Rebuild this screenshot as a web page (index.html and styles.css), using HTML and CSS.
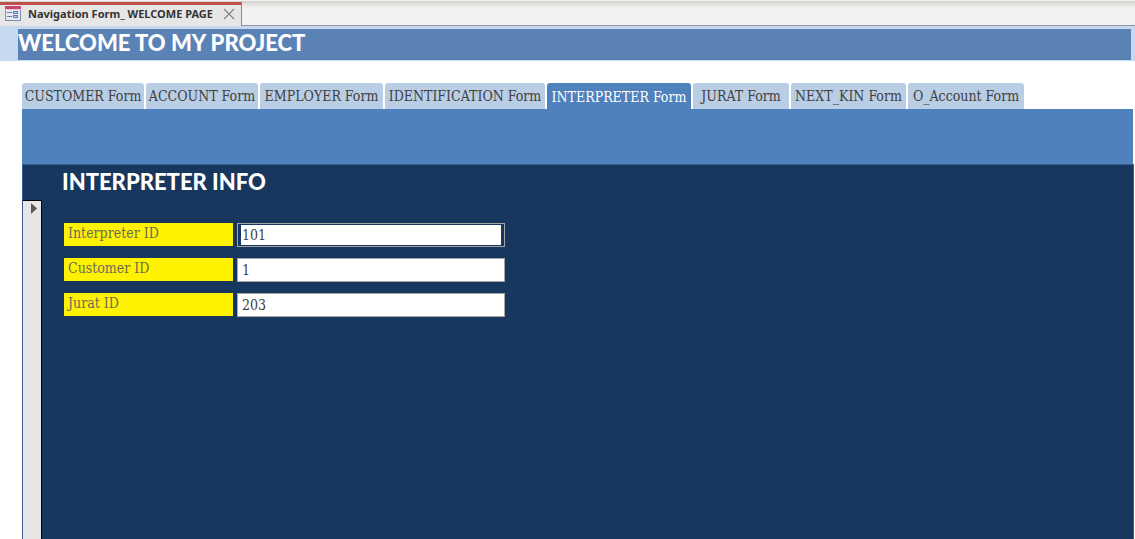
FILE: index.html
```html
<!DOCTYPE html>
<html lang="en">
<head>
<meta charset="utf-8">
<title>Navigation Form_ WELCOME PAGE</title>
<link rel="stylesheet" href="styles.css">
</head>
<body>
<div class="document-bar">
  <div class="document-tab">
    <svg class="form-icon" width="16" height="15" viewBox="0 0 16 15" aria-hidden="true">
      <rect x="0" y="0" width="16" height="15" fill="#7f8fb5"/>
      <rect x="1" y="3" width="14" height="11" fill="#e4e9f4"/>
      <rect x="0" y="0" width="16" height="3" fill="#c4476f"/>
      <rect x="0" y="3" width="16" height="1" fill="#ebc3d0"/>
      <path d="M2 6.500h5M2 10.500h5" stroke="#6a7ca6"/>
      <rect x="8.500" y="5.500" width="4" height="2" fill="#c5d2e8" stroke="#6a7ca6"/>
      <rect x="8.500" y="9.500" width="4" height="2" fill="#c5d2e8" stroke="#6a7ca6"/>
    </svg>
    <span class="document-title">Navigation Form_ WELCOME PAGE</span>
    <button class="close-button" type="button" aria-label="Close">
      <svg width="12" height="12" viewBox="0 0 12 12"><path d="M1 1l10 10M11 1L1 11" stroke="#858585" stroke-width="1.200"/></svg>
    </button>
  </div>
</div>
<header class="page-header"><h1 class="page-title">WELCOME TO MY PROJECT</h1></header>
<main class="workspace">
  <nav class="form-tabs">
    <button class="form-tab" type="button">CUSTOMER Form</button>
    <button class="form-tab" type="button">ACCOUNT Form</button>
    <button class="form-tab" type="button">EMPLOYER Form</button>
    <button class="form-tab" type="button">IDENTIFICATION Form</button>
    <button class="form-tab active" type="button" aria-current="page">INTERPRETER Form</button>
    <button class="form-tab" type="button">JURAT Form</button>
    <button class="form-tab" type="button">NEXT_KIN Form</button>
    <button class="form-tab" type="button">O_Account Form</button>
  </nav>
  <div class="band"></div>
  <section class="subform">
    <h2 class="subform-title">INTERPRETER INFO</h2>
    <div class="record">
      <button class="record-selector" type="button" aria-label="Current record">
        <svg width="6" height="11" viewBox="0 0 6 11"><path d="M0 0l6 5.500L0 11z" fill="#595959"/></svg>
      </button>
      <form class="fields">
        <label class="field-label" for="interpreter">Interpreter ID</label>
        <div class="field-box current"><input class="field-input" id="interpreter" value="101"></div>
        <label class="field-label" for="customer">Customer ID</label>
        <div class="field-box"><input class="field-input" id="customer" value="1"></div>
        <label class="field-label" for="jurat">Jurat ID</label>
        <div class="field-box"><input class="field-input" id="jurat" value="203"></div>
      </form>
    </div>
  </section>
</main>
</body>
</html>
```
FILE: styles.css
```css
* { box-sizing: border-box; }

body {
  margin: 0;
  min-height: 100vh;
  display: flex;
  flex-direction: column;
  background: #fff;
  color: #404040;
  font: 14px/20px "DejaVu Serif Condensed", "DejaVu Serif", serif;
}

button, input { font: inherit; color: inherit; border: 0; border-radius: 0; margin: 0; padding: 0; }

.document-bar {
  display: flex;
  height: 26px;
  padding-top: 2px;
  border-bottom: 1px solid #8e979f;
  background: linear-gradient(#f3f2f0 1px, #cfcecb 1px, #dddcda 3px, #f3f2f0 8px);
}

.document-tab {
  display: flex;
  align-items: center;
  width: 242px;
  height: 24px;
  padding: 0 6px 4px 5px;
  border-top: 3px solid #c0504d;
  border-right: 1px solid #8a8a8a;
  background: #e6e6e6;
}

.document-title {
  margin-left: 7px;
  font: 700 11px/16px "Noto Sans", sans-serif;
  color: #333;
  white-space: nowrap;
}

.close-button { display: flex; margin-left: auto; background: none; }

.page-header {
  padding: 3px 4px 1px 18px;
  background: #c6d9f1;
}

.page-title, .subform-title {
  margin: 0;
  color: #fff;
  font: 900 22px/28px Lato, sans-serif;
}

.page-title { height: 31px; background: #5b82b5; }

.workspace {
  flex: 1;
  display: flex;
  flex-direction: column;
  padding: 22px 1px 0 22px;
}

.form-tabs {
  display: grid;
  grid-template-columns: 122px 112px 123px 160px 144px 96px 115px 116px;
  gap: 2px;
}

.form-tab {
  height: 26px;
  border-radius: 3px 3px 0 0;
  background: #b9cde5;
  white-space: nowrap;
}

.form-tab.active { background: #4f81bd; color: #fff; padding-top: 1px; }

.band { height: 55px; margin-right: 1px; background: #4f81bd; }

.subform {
  flex: 1;
  display: flex;
  flex-direction: column;
  border: 1px solid #376092;
  border-bottom: 0;
  background: #17375e;
}

.subform-title { height: 35px; padding: 3px 0 0 39px; }

.record { flex: 1; display: flex; }

.record-selector {
  display: flex;
  justify-content: center;
  align-items: flex-start;
  width: 19px;
  padding: 2px 0 0 3px;
  border-top: 1px solid #000;
  border-right: 1px solid #000;
  background: #e6e6e6;
}

.fields {
  display: grid;
  grid-template-columns: 169px 268px;
  grid-auto-rows: 24px;
  align-content: start;
  gap: 11px 4px;
  padding: 23px 22px;
}

.field-label {
  height: 23px;
  padding-left: 4px;
  background: #fff200;
  color: #6b6b5a;
}

.field-box { border: 1px solid #a6a6a6; background: #fff; }

.field-box.current { padding: 1px 3px; background: #17375e; }

.field-input { display: block; width: 100%; height: 22px; padding-left: 4px; background: #fff; outline: 0; }

.field-box.current .field-input { height: 20px; padding-left: 1px; }
```
